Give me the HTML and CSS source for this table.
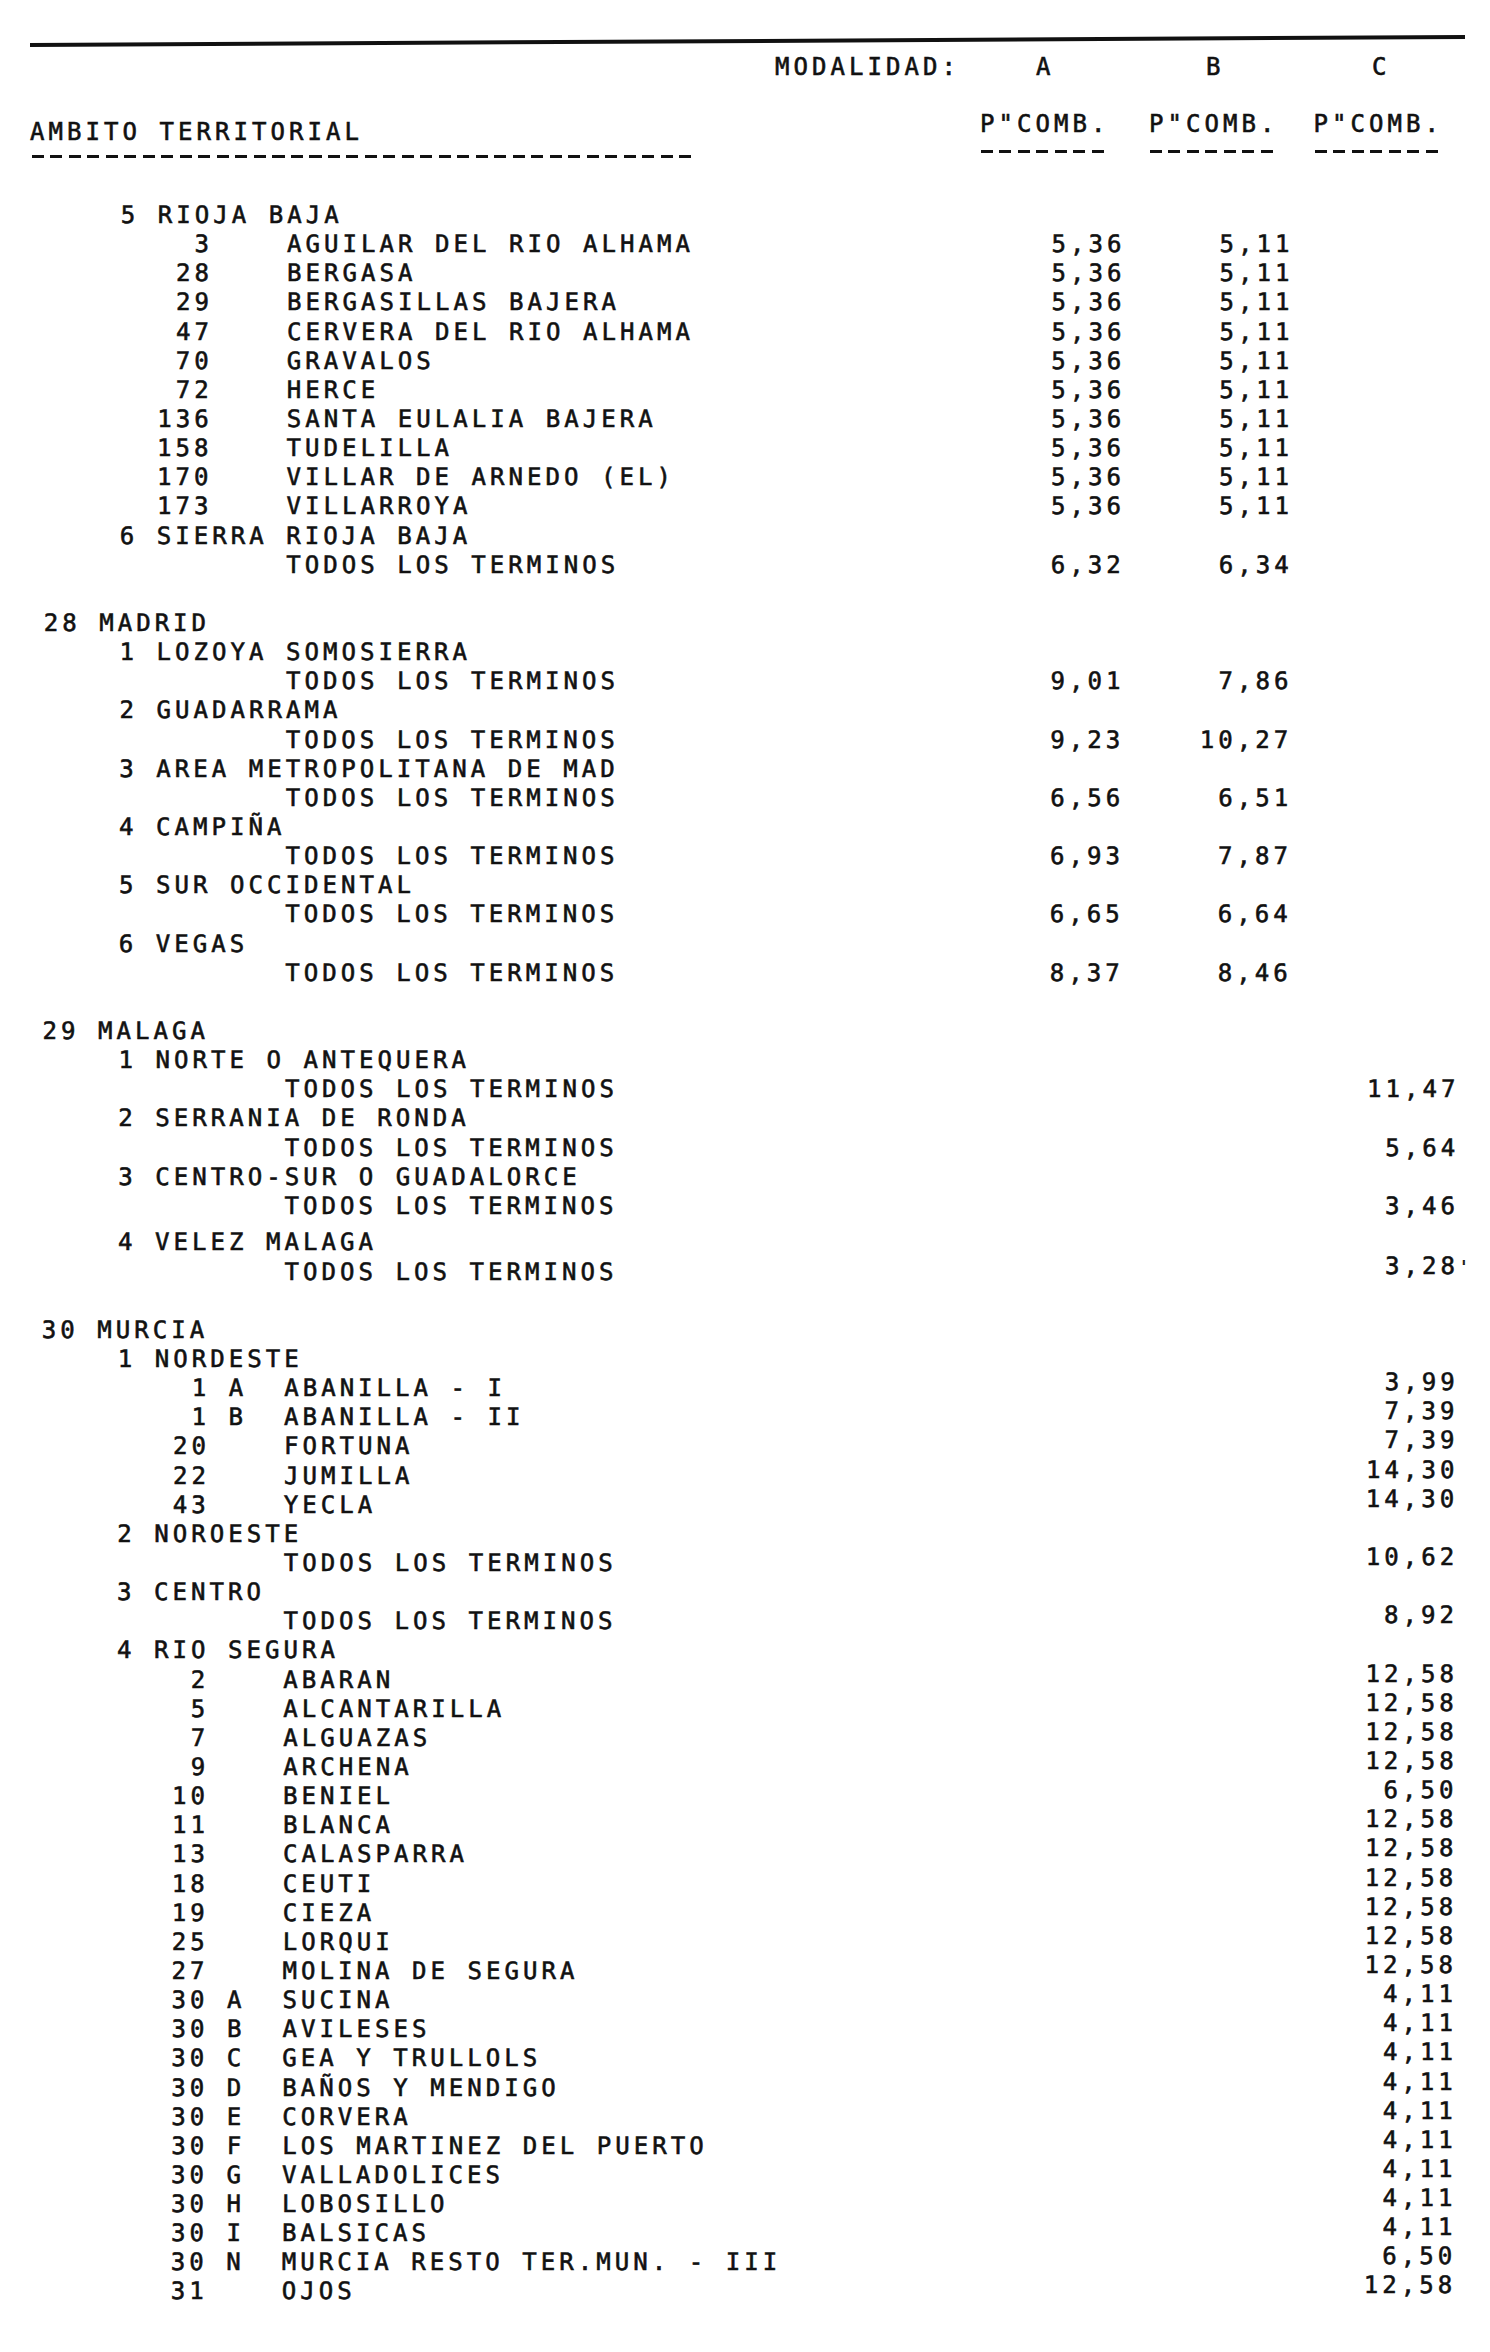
FILE: index.html
```html
<!DOCTYPE html>
<html lang="es">
<head>
<meta charset="utf-8">
<title>Ambito territorial - P"COMB.</title>
<link rel="stylesheet" href="styles.css">
</head>
<body>
<div class="page">
  <div class="rule"></div>

  <div class="hdr1">
    <span class="h-mod">MODALIDAD:</span>
    <span class="h-a">A</span>
    <span class="h-b">B</span>
    <span class="h-c">C</span>
  </div>

  <div class="hdr2">
    <div class="h-ambito">
      <div class="h-text">AMBITO TERRITORIAL</div>
      <div class="dash dash-long"></div>
    </div>
    <div class="h-col h-col-a">
      <div class="h-text">P&quot;COMB.</div>
      <div class="dash dash-short"></div>
    </div>
    <div class="h-col h-col-b">
      <div class="h-text">P&quot;COMB.</div>
      <div class="dash dash-short"></div>
    </div>
    <div class="h-col h-col-c">
      <div class="h-text">P&quot;COMB.</div>
      <div class="dash dash-short"></div>
    </div>
  </div>

  <div class="data">
    <section class="block">
      <div class="row"><span class="lbl com">5 RIOJA BAJA</span></div>
      <div class="row"><span class="lbl mun"><span class="code">3</span><span class="suf"></span><span class="name">AGUILAR DEL RIO ALHAMA</span></span><span class="va">5,36</span><span class="vb">5,11</span></div>
      <div class="row"><span class="lbl mun"><span class="code">28</span><span class="suf"></span><span class="name">BERGASA</span></span><span class="va">5,36</span><span class="vb">5,11</span></div>
      <div class="row"><span class="lbl mun"><span class="code">29</span><span class="suf"></span><span class="name">BERGASILLAS BAJERA</span></span><span class="va">5,36</span><span class="vb">5,11</span></div>
      <div class="row"><span class="lbl mun"><span class="code">47</span><span class="suf"></span><span class="name">CERVERA DEL RIO ALHAMA</span></span><span class="va">5,36</span><span class="vb">5,11</span></div>
      <div class="row"><span class="lbl mun"><span class="code">70</span><span class="suf"></span><span class="name">GRAVALOS</span></span><span class="va">5,36</span><span class="vb">5,11</span></div>
      <div class="row"><span class="lbl mun"><span class="code">72</span><span class="suf"></span><span class="name">HERCE</span></span><span class="va">5,36</span><span class="vb">5,11</span></div>
      <div class="row"><span class="lbl mun"><span class="code">136</span><span class="suf"></span><span class="name">SANTA EULALIA BAJERA</span></span><span class="va">5,36</span><span class="vb">5,11</span></div>
      <div class="row"><span class="lbl mun"><span class="code">158</span><span class="suf"></span><span class="name">TUDELILLA</span></span><span class="va">5,36</span><span class="vb">5,11</span></div>
      <div class="row"><span class="lbl mun"><span class="code">170</span><span class="suf"></span><span class="name">VILLAR DE ARNEDO (EL)</span></span><span class="va">5,36</span><span class="vb">5,11</span></div>
      <div class="row"><span class="lbl mun"><span class="code">173</span><span class="suf"></span><span class="name">VILLARROYA</span></span><span class="va">5,36</span><span class="vb">5,11</span></div>
      <div class="row"><span class="lbl com">6 SIERRA RIOJA BAJA</span></div>
      <div class="row"><span class="lbl all">TODOS LOS TERMINOS</span><span class="va">6,32</span><span class="vb">6,34</span></div>
    </section>

    <section class="block">
      <div class="row"><span class="lbl prov">28 MADRID</span></div>
      <div class="row"><span class="lbl com">1 LOZOYA SOMOSIERRA</span></div>
      <div class="row"><span class="lbl all">TODOS LOS TERMINOS</span><span class="va">9,01</span><span class="vb">7,86</span></div>
      <div class="row"><span class="lbl com">2 GUADARRAMA</span></div>
      <div class="row"><span class="lbl all">TODOS LOS TERMINOS</span><span class="va">9,23</span><span class="vb">10,27</span></div>
      <div class="row"><span class="lbl com">3 AREA METROPOLITANA DE MAD</span></div>
      <div class="row"><span class="lbl all">TODOS LOS TERMINOS</span><span class="va">6,56</span><span class="vb">6,51</span></div>
      <div class="row"><span class="lbl com">4 CAMPIÑA</span></div>
      <div class="row"><span class="lbl all">TODOS LOS TERMINOS</span><span class="va">6,93</span><span class="vb">7,87</span></div>
      <div class="row"><span class="lbl com">5 SUR OCCIDENTAL</span></div>
      <div class="row"><span class="lbl all">TODOS LOS TERMINOS</span><span class="va">6,65</span><span class="vb">6,64</span></div>
      <div class="row"><span class="lbl com">6 VEGAS</span></div>
      <div class="row"><span class="lbl all">TODOS LOS TERMINOS</span><span class="va">8,37</span><span class="vb">8,46</span></div>
    </section>

    <section class="block">
      <div class="row"><span class="lbl prov">29 MALAGA</span></div>
      <div class="row"><span class="lbl com">1 NORTE O ANTEQUERA</span></div>
      <div class="row"><span class="lbl all">TODOS LOS TERMINOS</span><span class="va"></span><span class="vb"></span><span class="vc">11,47</span></div>
      <div class="row"><span class="lbl com">2 SERRANIA DE RONDA</span></div>
      <div class="row"><span class="lbl all">TODOS LOS TERMINOS</span><span class="va"></span><span class="vb"></span><span class="vc">5,64</span></div>
      <div class="row"><span class="lbl com">3 CENTRO-SUR O GUADALORCE</span></div>
      <div class="row"><span class="lbl all">TODOS LOS TERMINOS</span><span class="va"></span><span class="vb"></span><span class="vc">3,46</span></div>
      <div class="row row-extra"><span class="lbl com">4 VELEZ MALAGA</span></div>
      <div class="row late"><span class="lbl all">TODOS LOS TERMINOS</span><span class="va"></span><span class="vb"></span><span class="vc">3,28</span><span class="tick">'</span></div>
    </section>

    <section class="block late">
      <div class="row"><span class="lbl prov">30 MURCIA</span></div>
      <div class="row"><span class="lbl com">1 NORDESTE</span></div>
      <div class="row"><span class="lbl mun"><span class="code">1</span><span class="suf">A</span><span class="name">ABANILLA - I</span></span><span class="va"></span><span class="vb"></span><span class="vc">3,99</span></div>
      <div class="row"><span class="lbl mun"><span class="code">1</span><span class="suf">B</span><span class="name">ABANILLA - II</span></span><span class="va"></span><span class="vb"></span><span class="vc">7,39</span></div>
      <div class="row"><span class="lbl mun"><span class="code">20</span><span class="suf"></span><span class="name">FORTUNA</span></span><span class="va"></span><span class="vb"></span><span class="vc">7,39</span></div>
      <div class="row"><span class="lbl mun"><span class="code">22</span><span class="suf"></span><span class="name">JUMILLA</span></span><span class="va"></span><span class="vb"></span><span class="vc">14,30</span></div>
      <div class="row"><span class="lbl mun"><span class="code">43</span><span class="suf"></span><span class="name">YECLA</span></span><span class="va"></span><span class="vb"></span><span class="vc">14,30</span></div>
      <div class="row"><span class="lbl com">2 NOROESTE</span></div>
      <div class="row"><span class="lbl all">TODOS LOS TERMINOS</span><span class="va"></span><span class="vb"></span><span class="vc">10,62</span></div>
      <div class="row"><span class="lbl com">3 CENTRO</span></div>
      <div class="row"><span class="lbl all">TODOS LOS TERMINOS</span><span class="va"></span><span class="vb"></span><span class="vc">8,92</span></div>
      <div class="row"><span class="lbl com">4 RIO SEGURA</span></div>
      <div class="row"><span class="lbl mun"><span class="code">2</span><span class="suf"></span><span class="name">ABARAN</span></span><span class="va"></span><span class="vb"></span><span class="vc">12,58</span></div>
      <div class="row"><span class="lbl mun"><span class="code">5</span><span class="suf"></span><span class="name">ALCANTARILLA</span></span><span class="va"></span><span class="vb"></span><span class="vc">12,58</span></div>
      <div class="row"><span class="lbl mun"><span class="code">7</span><span class="suf"></span><span class="name">ALGUAZAS</span></span><span class="va"></span><span class="vb"></span><span class="vc">12,58</span></div>
      <div class="row"><span class="lbl mun"><span class="code">9</span><span class="suf"></span><span class="name">ARCHENA</span></span><span class="va"></span><span class="vb"></span><span class="vc">12,58</span></div>
      <div class="row"><span class="lbl mun"><span class="code">10</span><span class="suf"></span><span class="name">BENIEL</span></span><span class="va"></span><span class="vb"></span><span class="vc">6,50</span></div>
      <div class="row"><span class="lbl mun"><span class="code">11</span><span class="suf"></span><span class="name">BLANCA</span></span><span class="va"></span><span class="vb"></span><span class="vc">12,58</span></div>
      <div class="row"><span class="lbl mun"><span class="code">13</span><span class="suf"></span><span class="name">CALASPARRA</span></span><span class="va"></span><span class="vb"></span><span class="vc">12,58</span></div>
      <div class="row"><span class="lbl mun"><span class="code">18</span><span class="suf"></span><span class="name">CEUTI</span></span><span class="va"></span><span class="vb"></span><span class="vc">12,58</span></div>
      <div class="row"><span class="lbl mun"><span class="code">19</span><span class="suf"></span><span class="name">CIEZA</span></span><span class="va"></span><span class="vb"></span><span class="vc">12,58</span></div>
      <div class="row"><span class="lbl mun"><span class="code">25</span><span class="suf"></span><span class="name">LORQUI</span></span><span class="va"></span><span class="vb"></span><span class="vc">12,58</span></div>
      <div class="row"><span class="lbl mun"><span class="code">27</span><span class="suf"></span><span class="name">MOLINA DE SEGURA</span></span><span class="va"></span><span class="vb"></span><span class="vc">12,58</span></div>
      <div class="row"><span class="lbl mun"><span class="code">30</span><span class="suf">A</span><span class="name">SUCINA</span></span><span class="va"></span><span class="vb"></span><span class="vc">4,11</span></div>
      <div class="row"><span class="lbl mun"><span class="code">30</span><span class="suf">B</span><span class="name">AVILESES</span></span><span class="va"></span><span class="vb"></span><span class="vc">4,11</span></div>
      <div class="row"><span class="lbl mun"><span class="code">30</span><span class="suf">C</span><span class="name">GEA Y TRULLOLS</span></span><span class="va"></span><span class="vb"></span><span class="vc">4,11</span></div>
      <div class="row"><span class="lbl mun"><span class="code">30</span><span class="suf">D</span><span class="name">BAÑOS Y MENDIGO</span></span><span class="va"></span><span class="vb"></span><span class="vc">4,11</span></div>
      <div class="row"><span class="lbl mun"><span class="code">30</span><span class="suf">E</span><span class="name">CORVERA</span></span><span class="va"></span><span class="vb"></span><span class="vc">4,11</span></div>
      <div class="row"><span class="lbl mun"><span class="code">30</span><span class="suf">F</span><span class="name">LOS MARTINEZ DEL PUERTO</span></span><span class="va"></span><span class="vb"></span><span class="vc">4,11</span></div>
      <div class="row"><span class="lbl mun"><span class="code">30</span><span class="suf">G</span><span class="name">VALLADOLICES</span></span><span class="va"></span><span class="vb"></span><span class="vc">4,11</span></div>
      <div class="row"><span class="lbl mun"><span class="code">30</span><span class="suf">H</span><span class="name">LOBOSILLO</span></span><span class="va"></span><span class="vb"></span><span class="vc">4,11</span></div>
      <div class="row"><span class="lbl mun"><span class="code">30</span><span class="suf">I</span><span class="name">BALSICAS</span></span><span class="va"></span><span class="vb"></span><span class="vc">4,11</span></div>
      <div class="row"><span class="lbl mun"><span class="code">30</span><span class="suf">N</span><span class="name">MURCIA RESTO TER.MUN. - III</span></span><span class="va"></span><span class="vb"></span><span class="vc">6,50</span></div>
      <div class="row"><span class="lbl mun"><span class="code">31</span><span class="suf"></span><span class="name">OJOS</span></span><span class="va"></span><span class="vb"></span><span class="vc">12,58</span></div>
    </section>
  </div>
</div>
</body>
</html>
```

FILE: styles.css
```css
:root {
  --c: 18.5px;
  --lh: 29.15px;
  --ink: #111;
}

html, body {
  margin: 0;
  padding: 0;
  background: #fff;
}

body {
  color: var(--ink);
  font-family: "DejaVu Sans Mono", "Liberation Mono", monospace;
  font-size: 24px;
  letter-spacing: 4.05px;
  line-height: var(--lh);
  -webkit-text-stroke: 0.6px var(--ink);
}

.page {
  width: 1490px;
  height: 2352px;
  overflow: hidden;
  white-space: nowrap;
}

/* top heavy rule */
.rule {
  margin-top: 39px;
  margin-left: 30px;
  width: 1435px;
  height: 4px;
  background: var(--ink);
  transform: rotate(-0.32deg);
}

/* MODALIDAD line */
.hdr1 {
  display: flex;
  margin-top: 10px;
  height: var(--lh);
  padding-left: 775px;
}
.h-mod { width: 261px; flex: none; }
.h-a { width: 170px; flex: none; }
.h-b { width: 166px; flex: none; }
.h-c { flex: none; }

/* column headers */
.hdr2 {
  display: flex;
  align-items: flex-start;
  margin-top: 28px;
  height: 48px;
}
.h-ambito {
  flex: none;
  width: 950px;
  padding-left: 30px;
  padding-top: 8px;
  box-sizing: border-box;
}
.h-col {
  flex: none;
  width: calc(7 * var(--c));
}
.h-col-a { margin-left: 30px; }
.h-col-b { margin-left: 39.5px; }
.h-col-c { margin-left: 35px; }

.dash {
  height: 3px;
  background: repeating-linear-gradient(90deg, var(--ink) 0 12px, transparent 12px var(--c));
}
.dash-long {
  margin-top: 8px;
  margin-left: 2px;
  width: calc(35 * var(--c) + 12px);
}
.dash-short {
  margin-top: 11px;
  margin-left: 1px;
  width: calc(6 * var(--c) + 12px);
}

/* data */
.data {
  margin-top: 43px;
  transform: skewX(-0.15deg);
}

.block + .block {
  margin-top: var(--lh);
}

.row {
  display: flex;
  height: var(--lh);
}
.row-extra { margin-top: 7.5px; }

.lbl {
  flex: none;
  width: 960px;
  box-sizing: border-box;
  display: flex;
}
.prov { padding-left: 42px; }
.com  { padding-left: 118px; }
.mun  { padding-left: 155px; }
.all  { padding-left: calc(155px + 7 * var(--c)); }

.code {
  flex: none;
  width: calc(3 * var(--c));
  text-align: right;
}
.suf {
  flex: none;
  width: calc(4 * var(--c));
  padding-left: var(--c);
  box-sizing: border-box;
}

.va, .vb, .vc {
  flex: none;
  text-align: right;
}
.va { width: 163px; }
.vb { width: 168px; }
.vc { width: 168px; }

/* right column printed slightly higher further down the sheet */
.late .vc,
.late .tick { margin-top: -6px; }

.tick {
  flex: none;
  letter-spacing: 0;
  font-size: 16px;
}
```
